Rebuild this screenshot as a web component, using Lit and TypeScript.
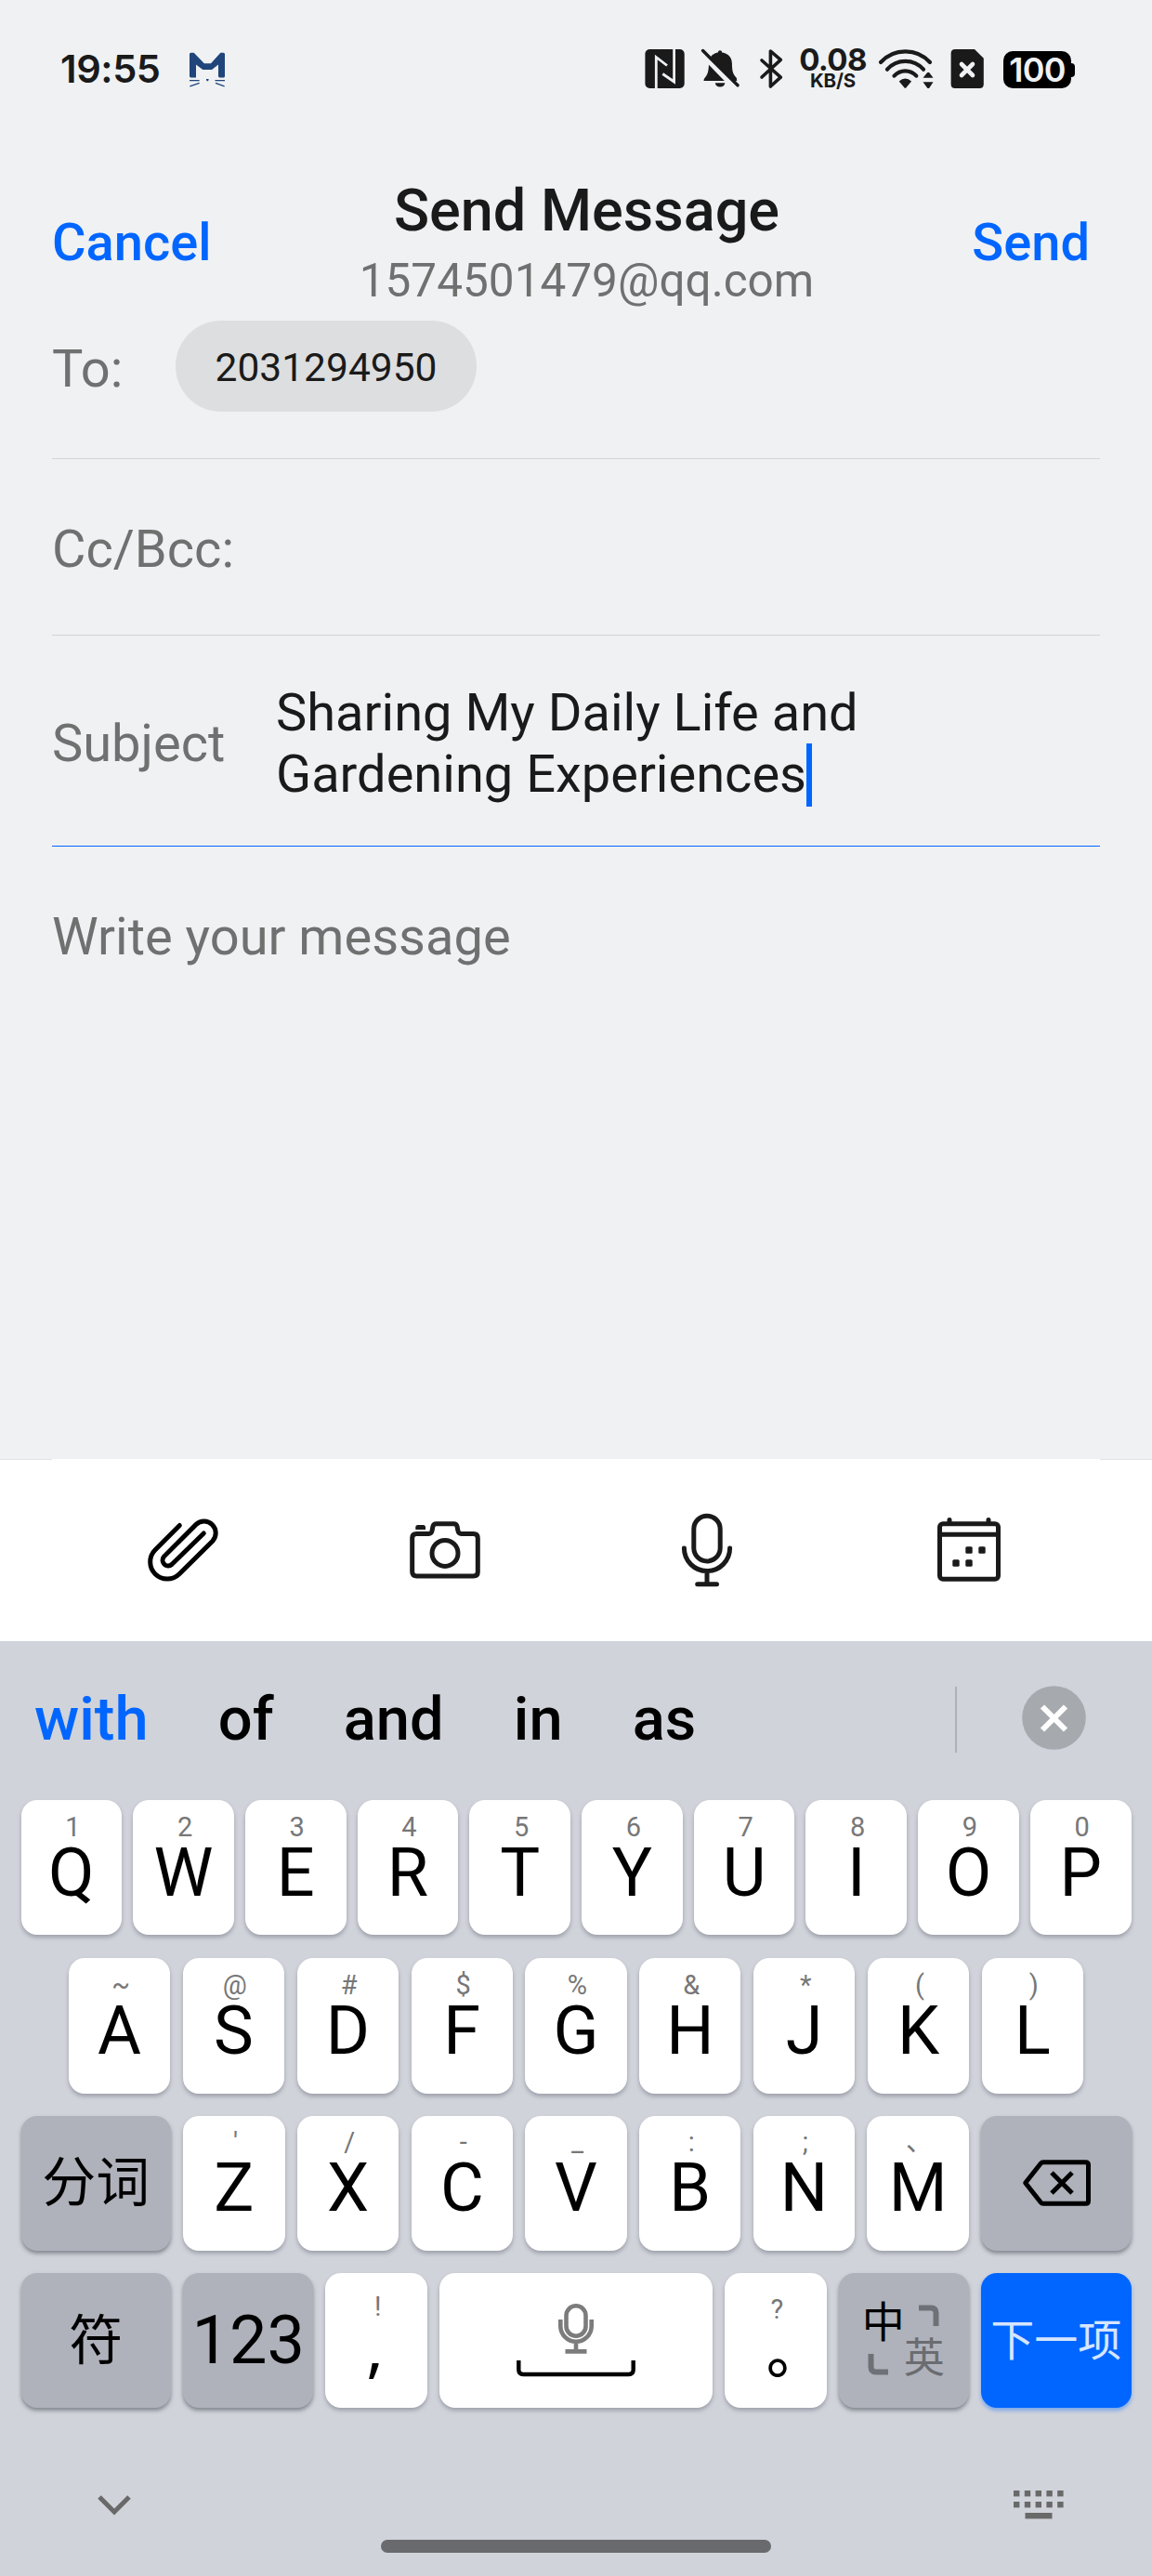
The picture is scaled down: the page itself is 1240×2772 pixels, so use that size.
import { LitElement, html, css, svg, nothing } from "lit";
import { customElement } from "lit/decorators.js";

interface Key {
  label: string;
  hint: string;
}

const keys = (labels: string, hints: string[]): Key[] =>
  [...labels].map((label, i) => ({ label, hint: hints[i] }));

const ROW_1 = keys("QWERTYUIOP", ["1", "2", "3", "4", "5", "6", "7", "8", "9", "0"]);
const ROW_2 = keys("ASDFGHJKL", ["~", "@", "#", "$", "%", "&", "*", "(", ")"]);
const ROW_3 = keys("ZXCVBNM", ["'", "/", "-", "_", ":", ";", "、"]);

@customElement("status-bar")
export class StatusBar extends LitElement {
  static styles = css`
    :host {
      display: flex;
      align-items: flex-start;
      height: 110px;
      padding-top: 50px;
      color: #1a1a1a;
      font-family: Inter, Roboto, sans-serif;
      font-weight: 600;
    }
    svg {
      display: block;
      height: 48px;
      flex: none;
    }
    .time {
      width: 134px;
      margin-left: 65px;
      font-size: 41.5px;
      line-height: 48px;
      letter-spacing: -0.4px;
      white-space: nowrap;
    }
    .mail {
      width: 46px;
      margin-left: 1px;
    }
    .nfc {
      width: 43px;
      margin-left: 448px;
    }
    .bell {
      width: 46px;
      margin-left: 15px;
    }
    .bt {
      width: 28px;
      margin-left: 18px;
    }
    .speed {
      width: 81px;
      margin-left: 12px;
      margin-right: 1px;
      text-align: center;
      white-space: nowrap;
    }
    .rate {
      font-size: 33px;
      line-height: 28px;
      letter-spacing: -0.6px;
      font-weight: 650;
    }
    .unit {
      font-size: 20.5px;
      line-height: 17px;
      font-weight: 650;
      letter-spacing: -0.2px;
    }
    .wifi {
      width: 63px;
      margin-left: 6px;
    }
    .sim {
      width: 38px;
      margin-left: 15px;
    }
    .battery {
      display: flex;
      align-items: center;
      margin: 5px 0 0 20px;
    }
    .level {
      width: 73px;
      height: 40px;
      border-radius: 10px;
      background: #000;
      color: #eff1f3;
      font-size: 36px;
      line-height: 40px;
      letter-spacing: -0.8px;
      text-align: center;
    }
    .nub {
      width: 4px;
      height: 15px;
      border-radius: 0 4px 4px 0;
      background: #000;
    }
  `;

  render() {
    return html`
      <div class="time">19:55</div>
      <svg class="mail" viewBox="0 0 46 48" fill="#1f457a">
        <path d="M4 8.2Q4 6.7 5.5 6.7H8.7L19.8 18.3H27L37.4 6.7H40.5Q42 6.7 42 8.2V32.5L41 33.4H36.500Q35 33.400 35 32V19.400L28 25H18.300L11 19.500V33.400H5.500Q4 33.400 4 32Z" />
        <path d="M22 35h2.600v1.200l-1.300 1.200-1.300-1.200z" />
        <g stroke="#1f457a" stroke-width="1.300">
          <path d="M4 36.600H14.600M31.500 36.600H42M4.400 42.800L14.600 39.300M32 39.300L41.600 42.800" />
        </g>
      </svg>
      <svg class="nfc" viewBox="0 0 43 48">
        <rect x=".4" y="3" width="42.300" height="42" rx="5" fill="#1a1a1a" />
        <path d="M12.300 45V11.500L24 20.500M19.300 29.500L31.600 38V3" fill="none" stroke="#eff1f3" stroke-width="2.800" />
      </svg>
      <svg class="bell" viewBox="0 0 46 48">
        <path
          fill="#1a1a1a"
          d="M23 4.200q2 0 2.300 2.300c7 1 10.400 5.500 10.600 11.500.200 9 .800 11 4.600 15.500.700.800.700 2.500.700 3.500H5.500c0-1 .2-2 .8-2.800 3.500-4 4.500-7 4.700-16.200.100-6 3.500-10.500 9.700-11.500Q21 4.200 23 4.200ZM17.800 39.300H28.400Q27.500 43.600 23.100 43.600T17.800 39.300Z"
        />
        <path d="M2.700 6.400L39.500 44" stroke="#eff1f3" stroke-width="7" />
        <path d="M4.600 4.600L42 41.800" stroke="#1a1a1a" stroke-width="3.500" stroke-linecap="round" />
      </svg>
      <svg class="bt" viewBox="0 0 28 48" fill="none" stroke="#1a1a1a" stroke-width="3.600" stroke-linejoin="round" stroke-linecap="round">
        <path d="M4 15L24.300 33.200L13.400 43V5L24.300 14.400L4 33" />
      </svg>
      <div class="speed">
        <div class="rate">0.08</div>
        <div class="unit">KB/S</div>
      </div>
      <svg class="wifi" viewBox="0 0 63 48">
        <g fill="none" stroke="#1a1a1a" stroke-width="4.200" stroke-linecap="round">
          <path d="M4 17A36 36 0 0 1 57 17" />
          <path d="M11 24.700A26 26 0 0 1 50 24.700" />
          <path d="M18.500 31.600A16 16 0 0 1 42.300 31.600" />
        </g>
        <path d="M23.700 37.500Q30.400 31.400 37.100 37.500L31.200 44.500Q30.400 45.300 29.600 44.500ZM49.500 33.800L54 28.200Q55.200 27.200 56.400 28.200L60.500 33.800ZM49.500 38.200H60.500L56.400 44.400Q55.200 45.400 54 44.400Z" fill="#1a1a1a" />
      </svg>
      <svg class="sim" viewBox="0 0 38 48">
        <path d="M6 3H27L36.800 12.700V40.500Q36.800 45 32.300 45H6Q1.600 45 1.600 40.500V7.500Q1.600 3 6 3Z" fill="#1a1a1a" />
        <path d="M13 19L25 31M25 19L13 31" stroke="#eff1f3" stroke-width="4.600" stroke-linecap="round" />
      </svg>
      <div class="battery">
        <div class="level">100</div>
        <div class="nub"></div>
      </div>
    `;
  }
}

@customElement("compose-form")
export class ComposeForm extends LitElement {
  static styles = css`
    :host {
      display: block;
      height: 1410px;
      font-size: 56px;
      line-height: 66px;
      color: #6f7170;
      white-space: nowrap;
    }
    .header {
      display: grid;
      grid-template-columns: 1fr auto 1fr;
      height: 185px;
      padding: 0 33px 0 56px;
      font-weight: 500;
      box-sizing: border-box;
    }
    .action {
      margin-top: 69px;
      font-size: 56px;
      line-height: 64px;
      color: #0066ff;
    }
    .send {
      justify-self: end;
      margin-right: 34px;
    }
    .titles {
      margin-top: 30px;
      text-align: center;
    }
    .title {
      font-size: 63px;
      line-height: 74px;
      color: #1a1a1a;
    }
    .account {
      margin-top: 9px;
      font-size: 49.5px;
      line-height: 58px;
      font-weight: 400;
    }
    .field {
      display: flex;
      align-items: flex-start;
      margin: 0 56px;
      border-bottom: 1px solid #d2d4d5;
    }
    .to {
      height: 148px;
    }
    .to .label {
      width: 133px;
      margin-top: 19px;
    }
    .chip {
      width: 324px;
      height: 98px;
      border-radius: 49px;
      background: #dddedf;
      color: #1a1a1a;
      font-size: 42.5px;
      line-height: 101px;
      text-align: center;
    }
    .cc {
      height: 189px;
    }
    .cc .label {
      margin-top: 64px;
    }
    .subject {
      height: 226px;
      border-bottom-color: #0066ff;
    }
    .subject .label {
      width: 241px;
      margin-top: 83px;
    }
    .value {
      margin-top: 50px;
      color: #1a1a1a;
    }
    .caret-line {
      position: relative;
      display: inline-block;
    }
    .caret {
      position: absolute;
      right: -6px;
      top: 0;
      width: 6px;
      height: 68px;
      background: #0066ff;
    }
    .message {
      margin: 64px 56px 0;
    }
  `;

  render() {
    return html`
      <div class="header">
        <div class="action">Cancel</div>
        <div class="titles">
          <div class="title">Send Message</div>
          <div class="account">1574501479@qq.com</div>
        </div>
        <div class="action send">Send</div>
      </div>
      <div class="field to">
        <div class="label">To:</div>
        <div class="chip">2031294950</div>
      </div>
      <div class="field cc"><div class="label">Cc/Bcc:</div></div>
      <div class="field subject">
        <div class="label">Subject</div>
        <div class="value">
          <div>Sharing My Daily Life and</div>
          <div class="caret-line">Gardening Experiences<span class="caret"></span></div>
        </div>
      </div>
      <div class="message">Write your message</div>
    `;
  }
}

@customElement("attach-bar")
export class AttachBar extends LitElement {
  static styles = css`
    :host {
      display: block;
      height: 196px;
      background: #fff;
    }
    .edge {
      display: flex;
      justify-content: space-between;
      height: 1px;
    }
    .stub {
      width: 56px;
      background: #e3e4e6;
    }
    .tools {
      display: grid;
      grid-template-columns: repeat(4, 1fr);
      align-items: center;
      justify-items: center;
      height: 194px;
      padding: 0 56px;
    }
    svg {
      width: 96px;
      height: 96px;
      fill: none;
      stroke: #1a1a1a;
      stroke-width: 5;
    }
    .clip {
      stroke: #000;
    }
    .solid {
      fill: #1a1a1a;
      stroke: none;
    }
  `;

  render() {
    return html`
      <div class="edge"><div class="stub"></div><div class="stub"></div></div>
      <div class="tools">
        <svg class="clip" viewBox="0 0 96 96" stroke-linecap="round">
          <path d="M44.300 21.500L18.100 47.700A18.300 18.300 0 0 0 44 73.700L79.900 38.200A12.600 12.600 0 0 0 62.100 20.400L27.400 55.100A6 6 0 0 0 35.900 63.500L70.300 30" />
        </svg>
        <svg viewBox="0 0 96 96" stroke-linejoin="round">
          <path d="M12.700 35Q12.700 30.400 17.400 30.400H30.500C32.800 30.400 33.600 29.400 34.100 27L34.900 22.800Q35.600 19.700 38.500 19.700H57.500Q60.400 19.700 61.100 22.800L61.900 27C62.400 29.400 63.200 30.400 65.500 30.400H78.600Q83.300 30.400 83.300 35V71.500Q83.300 76 78.600 76H17.400Q12.700 76 12.700 71.500Z" />
          <circle cx="48" cy="51.400" r="14" />
          <path class="solid" d="M16.300 26V23.500Q16.300 21 18.800 21H24.500Q27 21 27 23.500V26Z" />
        </svg>
        <svg viewBox="0 0 96 96" stroke-linecap="round">
          <rect x="33.800" y="11.200" width="28.400" height="48.800" rx="14.200" />
          <path d="M23.400 46A24.600 24.600 0 0 0 72.600 46M48 71V84M37.700 84.700H58.500" />
        </svg>
        <svg viewBox="0 0 96 96" stroke-linecap="round">
          <rect x="16.500" y="19.700" width="63" height="59.600" rx="3.500" />
          <path d="M16.500 31.300H79.500M27 15.500V19M69 15.500V19" />
          <g class="solid">
            <rect x="44.300" y="44.300" width="7.400" height="7.400" rx="1.500" />
            <rect x="58.300" y="44.300" width="7.400" height="7.400" rx="1.500" />
            <rect x="30.300" y="58.300" width="7.400" height="7.400" rx="1.500" />
            <rect x="44.300" y="58.300" width="7.400" height="7.400" rx="1.500" />
          </g>
        </svg>
      </div>
    `;
  }
}

@customElement("soft-keyboard")
export class SoftKeyboard extends LitElement {
  static styles = css`
    :host {
      display: flex;
      flex-direction: column;
      height: 1006px;
      background: #d0d3da;
      color: #000;
    }
    .suggest {
      display: flex;
      align-items: center;
      height: 171px;
      box-sizing: border-box;
      padding: 0 71px 7px 37px;
    }
    .words {
      display: flex;
      flex: 1;
      gap: 75.2px;
      padding-top: 3px;
      font-size: 65px;
      line-height: 76px;
      font-weight: 500;
    }
    .first {
      color: #0066ff;
    }
    .divider {
      width: 2px;
      height: 71px;
      margin: 5px 70px 0 0;
      background: #aeb1b6;
    }
    .close {
      width: 69px;
      height: 69px;
    }
    .rows {
      display: flex;
      flex-direction: column;
      gap: 24.2px;
      padding: 0 22.5px;
    }
    .row {
      display: flex;
      gap: 13.2px;
      height: 145.1px;
    }
    .row.top {
      gap: 12px;
      margin-bottom: 1.2px;
    }
    .row.middle {
      padding: 0 51.5px;
      gap: 13.8px;
    }
    .key {
      display: flex;
      flex: 1 1 0;
      flex-direction: column;
      align-items: center;
      box-sizing: border-box;
      padding-top: 14.6px;
      border-radius: 17px;
      background: #fff;
      box-shadow: 0 3px 4px rgba(90, 94, 108, 0.42);
      white-space: nowrap;
    }
    .hint {
      padding-left: 3px;
      font-size: 29px;
      line-height: 29px;
      color: #777;
    }
    .letter {
      margin-top: 5px;
      font-size: 72px;
      line-height: 60px;
    }
    .fn {
      flex: none;
      width: 161.5px;
      justify-content: center;
      padding: 0;
      background: #afb2bb;
      box-shadow: 0 3px 4px rgba(70, 74, 84, 0.55);
    }
    .han {
      font-size: 58px;
      line-height: 60px;
    }
    .num {
      width: 140px;
      font-size: 72px;
      line-height: 80px;
    }
    .punct {
      flex: none;
      width: 109.5px;
      padding-top: 22px;
    }
    .question {
      padding-top: 24.5px;
    }
    .comma {
      margin-top: -3px;
      padding-right: 3px;
      font-family: "Noto Sans", sans-serif;
      font-size: 70px;
      line-height: 60px;
    }
    .stop {
      width: 20px;
      font-size: 62px;
      line-height: 60px;
      margin-top: 3px;
      font-weight: 500;
    }
    .space {
      padding: 33px 0 0;
    }
    .lang {
      display: grid;
      width: 140px;
      grid-template-columns: 44px 44px;
      grid-template-rows: 39px 39px;
      place-content: center;
      place-items: center;
    }
    .zh {
      font-size: 46px;
      line-height: 44px;
    }
    .en {
      font-size: 44px;
      line-height: 44px;
      color: #6a6c70;
    }
    .corner-top {
      align-self: start;
      margin-left: 10px;
    }
    .corner-bottom {
      align-self: end;
      justify-self: start;
      margin: 0 0 2px 5px;
    }
    .next {
      background: #0066ff;
      color: #d6e5ff;
      font-size: 47px;
      line-height: 60px;
      box-shadow: 0 3px 4px rgba(0, 102, 255, 0.4);
    }
    .foot {
      display: flex;
      justify-content: space-between;
      padding: 87px 93px 0 102px;
    }
    .foot svg {
      height: 36px;
    }
    .home {
      width: 420px;
      height: 14px;
      margin: 19px auto 0;
      border-radius: 7px;
      background: #696a6d;
    }
    svg {
      display: block;
      flex: none;
    }
  `;

  private renderKey(key: Key) {
    return html`<div class="key">
      <div class="hint">${key.hint}</div>
      <div class="letter">${key.label}</div>
    </div>`;
  }

  render() {
    const dots = [0, 1].flatMap((r) =>
      [0, 1, 2, 3, 4].map(
        (c) => svg`<rect x=${c * 11.8} y=${2 + r * 12} width="6.400" height="6.400" />`
      )
    );
    return html`
      <div class="suggest">
        <div class="words">
          ${["with", "of", "and", "in", "as"].map(
            (w, i) => html`<span class=${i === 0 ? "first" : nothing}>${w}</span>`
          )}
        </div>
        <div class="divider"></div>
        <svg class="close" viewBox="0 0 69 69">
          <circle cx="34.500" cy="34.500" r="34.300" fill="#a6a9ae" />
          <path d="M22 22.500L47 47.500M47 22.500L22 47.500" stroke="#fff" stroke-width="6" />
        </svg>
      </div>
      <div class="rows">
        <div class="row top">${ROW_1.map((k) => this.renderKey(k))}</div>
        <div class="row middle">${ROW_2.map((k) => this.renderKey(k))}</div>
        <div class="row">
          <div class="key fn han">分词</div>
          ${ROW_3.map((k) => this.renderKey(k))}
          <div class="key fn">
            <svg width="76" height="52" viewBox="0 0 76 52" fill="none" stroke="#000" stroke-width="5">
              <path d="M24 3.700H69.500Q72.500 3.700 72.500 6.700V45.300Q72.500 48.300 69.500 48.300H24Q22.300 48.300 21.300 47L4.700 26L21.300 5Q22.300 3.700 24 3.700Z" stroke-linejoin="round" />
              <path d="M33 15L55 37M55 15L33 37" />
            </svg>
          </div>
        </div>
        <div class="row">
          <div class="key fn han">符</div>
          <div class="key fn num">123</div>
          <div class="key punct">
            <div class="hint">!</div>
            <div class="comma">,</div>
          </div>
          <div class="key space">
            <svg width="130" height="80" viewBox="0 0 130 80" fill="none">
              <g stroke="#7c7c7c" stroke-width="4.600">
                <rect x="54.500" y="2.300" width="21" height="32.500" rx="10.500" />
                <path d="M48.300 17V24A16.700 16.700 0 0 0 81.700 24V17M65 41V50M53.500 51.400H76.500" />
              </g>
              <path d="M3.300 61V71Q3.300 76 8.300 76H121.700Q126.700 76 126.700 71V61" stroke="#000" stroke-width="4.400" />
            </svg>
          </div>
          <div class="key punct question">
            <div class="hint">?</div>
            <div class="stop">。</div>
          </div>
          <div class="key fn lang">
            <span class="zh">中</span>
            <svg class="corner-top" width="22" height="23" viewBox="0 0 22 23" fill="none" stroke="#6f7176" stroke-width="6">
              <path d="M0 3.500H13Q18.500 3.500 18.500 9V23" />
            </svg>
            <svg class="corner-bottom" width="22" height="23" viewBox="0 0 22 23" fill="none" stroke="#6f7176" stroke-width="6">
              <path d="M3.500 0V14Q3.500 19.500 9 19.500H22" />
            </svg>
            <span class="en">英</span>
          </div>
          <div class="key fn next">下一项</div>
        </div>
      </div>
      <div class="foot">
        <svg width="42" viewBox="0 0 42 36" fill="none" stroke="#696969" stroke-width="5">
          <path d="M5 9L21 25L37 9" />
        </svg>
        <svg width="56" viewBox="0 0 56 36" fill="#696969">
          ${dots}
          <rect x="12.500" y="26" width="29" height="6.400" />
        </svg>
      </div>
      <div class="home"></div>
    `;
  }
}

@customElement("app-root")
export class AppRoot extends LitElement {
  static styles = css`
    :host {
      display: block;
      width: 1240px;
      height: 2772px;
      overflow: hidden;
      background: #eff1f3;
      font-family: Roboto, "Noto Sans CJK SC", sans-serif;
    }
  `;

  render() {
    return html`
      <status-bar></status-bar>
      <compose-form></compose-form>
      <attach-bar></attach-bar>
      <soft-keyboard></soft-keyboard>
    `;
  }
}
